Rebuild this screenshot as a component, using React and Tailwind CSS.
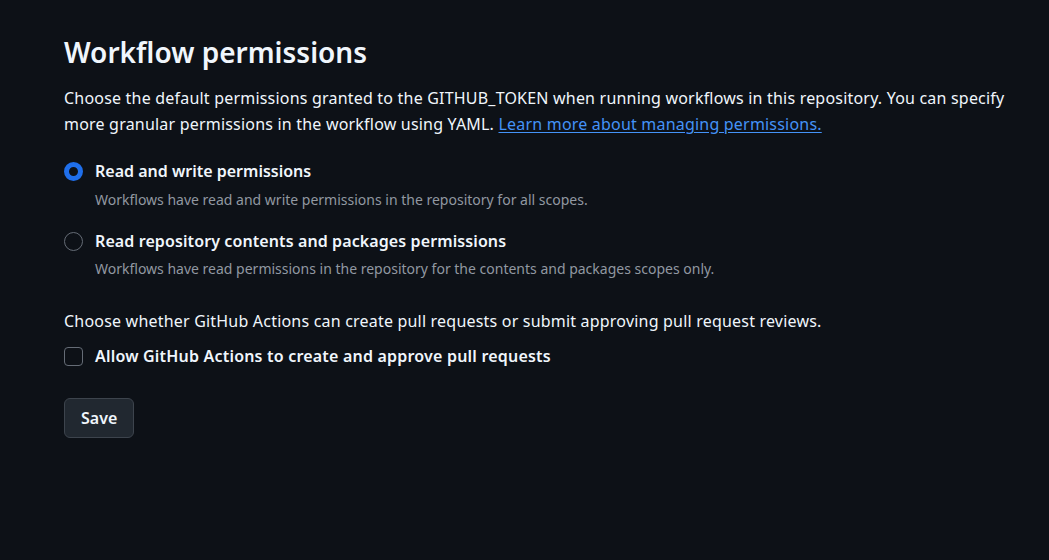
export default function App() {
  return (
    <div className="min-h-[560px] w-full bg-[#0d1117] text-[#f0f6fc] font-['Noto_Sans',sans-serif]">
      <div className="pl-16 pr-6 pt-[34px]">
        <h2 className="text-[28px] leading-9 font-semibold">Workflow permissions</h2>
        <p className="mt-[15px] text-[16px] leading-[26px] tracking-[0.2px] text-[#f0f6fc]">
          Choose the default permissions granted to the GITHUB_TOKEN when running workflows in this repository. You can specify
          more granular permissions in the workflow using YAML.{' '}
          <a href="#" className="text-[#4493f8] underline underline-offset-2">Learn more about managing permissions.</a>
        </p>

        <div className="mt-[22px] flex flex-col gap-[19px]">
          <label className="flex items-start gap-3">
            <span className="mt-[3px] h-[19px] w-[19px] shrink-0 rounded-full border-[5px] border-[#1f6feb] bg-[#0d1117]" />
            <span>
              <span className="block text-[16px] leading-6 font-semibold">Read and write permissions</span>
              <span className="block mt-[7px] text-[14px] leading-5 text-[#9198a1]">
                Workflows have read and write permissions in the repository for all scopes.
              </span>
            </span>
          </label>
          <label className="flex items-start gap-3">
            <span className="mt-[3px] h-[19px] w-[19px] shrink-0 rounded-full border border-[#656c76] bg-[#0d1117]" />
            <span>
              <span className="block text-[16px] leading-6 font-semibold tracking-[0.1px]">Read repository contents and packages permissions</span>
              <span className="block mt-[6px] text-[14px] leading-5 text-[#9198a1]">
                Workflows have read permissions in the repository for the contents and packages scopes only.
              </span>
            </span>
          </label>
        </div>

        <p className="mt-[30px] text-[16px] leading-6 tracking-[0.2px]">
          Choose whether GitHub Actions can create pull requests or submit approving pull request reviews.
        </p>
        <label className="mt-[11px] flex items-center gap-3">
          <span className="h-[19px] w-[19px] shrink-0 rounded-[4px] border border-[#656c76] bg-[#0d1117]" />
          <span className="text-[16px] leading-6 font-semibold tracking-[0.2px]">Allow GitHub Actions to create and approve pull requests</span>
        </label>

        <button className="mt-[30px] h-10 rounded-md border border-[#3d444d] bg-[#212830] px-4 text-[16px] font-semibold text-[#f0f6fc]">
          Save
        </button>
      </div>
    </div>
  )
}
